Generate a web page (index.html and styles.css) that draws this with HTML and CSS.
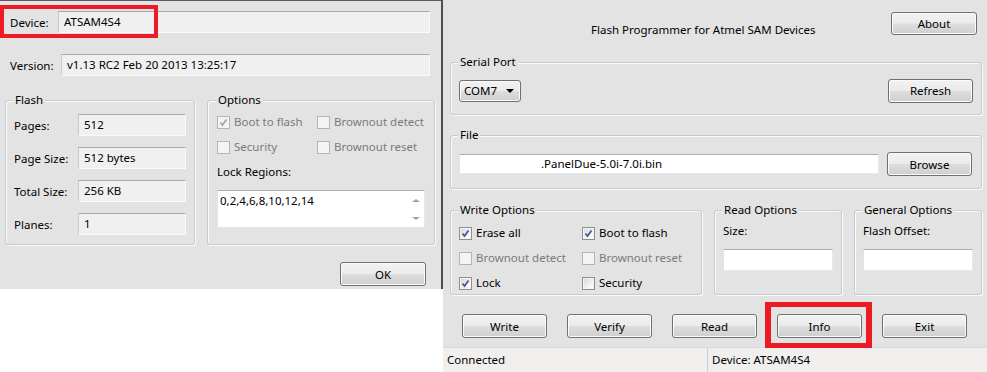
FILE: index.html
```html
<!DOCTYPE html>
<html lang="en">
<head>
    <meta charset="UTF-8">
    <title>SAM-BA Flash Programmer</title>
    <link rel="stylesheet" href="styles.css">
</head>
<body>
<div class="screen">
    <div class="dialog">
        <div class="mark mark-device"></div>
        <div class="field-row row-device">
            <span class="label label-device">Device:</span>
            <div class="field">ATSAM4S4</div>
        </div>
        <div class="field-row row-version">
            <span class="label label-version">Version:</span>
            <div class="field">v1.13 RC2 Feb 20 2013 13:25:17</div>
        </div>
        <div class="dialog-groups">
            <div class="group group-flash">
                <span class="group-title">Flash</span>
                <div class="flash-grid">
                    <span>Pages:</span><div class="field">512</div>
                    <span>Page Size:</span><div class="field">512 bytes</div>
                    <span>Total Size:</span><div class="field">256 KB</div>
                    <span>Planes:</span><div class="field">1</div>
                </div>
            </div>
            <div class="group group-options">
                <span class="group-title">Options</span>
                <div class="check-grid">
                    <label class="check disabled"><span class="cb"><svg viewBox="0 0 11 11"><path d="M2.5 5.5 L4.5 8 L8.5 2.5"/></svg></span>Boot to flash</label>
                    <label class="check disabled"><span class="cb"></span>Brownout detect</label>
                    <label class="check disabled"><span class="cb"></span>Security</label>
                    <label class="check disabled"><span class="cb"></span>Brownout reset</label>
                </div>
                <div class="lock-label">Lock Regions:</div>
                <div class="lock-box">
                    <div class="lock-text">0,2,4,6,8,10,12,14</div>
                    <div class="lock-scroll"><span class="arrow-up"></span><span class="arrow-down"></span></div>
                </div>
            </div>
        </div>
        <div class="dialog-footer">
            <button class="btn btn-ok">OK</button>
        </div>
    </div>

    <div class="main">
        <div class="main-header">
            <div class="app-title">Flash Programmer for Atmel SAM Devices</div>
            <button class="btn btn-about">About</button>
        </div>
        <div class="main-body">
            <div class="group group-serial">
                <span class="group-title">Serial Port</span>
                <div class="serial-row">
                    <div class="combo">COM7<span class="combo-arrow"></span></div>
                    <button class="btn">Refresh</button>
                </div>
            </div>
            <div class="group group-file">
                <span class="group-title">File</span>
                <div class="file-row">
                    <div class="input input-file">.PanelDue-5.0i-7.0i.bin</div>
                    <button class="btn">Browse</button>
                </div>
            </div>
            <div class="options-row">
                <div class="group group-write">
                    <span class="group-title">Write Options</span>
                    <div class="check-grid write-grid">
                        <label class="check"><span class="cb"><svg viewBox="0 0 11 11"><path d="M2.5 5.5 L4.5 8 L8.5 2.5"/></svg></span>Erase all</label>
                        <label class="check"><span class="cb"><svg viewBox="0 0 11 11"><path d="M2.5 5.5 L4.5 8 L8.5 2.5"/></svg></span>Boot to flash</label>
                        <label class="check disabled"><span class="cb"></span>Brownout detect</label>
                        <label class="check disabled"><span class="cb"></span>Brownout reset</label>
                        <label class="check"><span class="cb"><svg viewBox="0 0 11 11"><path d="M2.5 5.5 L4.5 8 L8.5 2.5"/></svg></span>Lock</label>
                        <label class="check"><span class="cb"></span>Security</label>
                    </div>
                </div>
                <div class="group group-small">
                    <span class="group-title">Read Options</span>
                    <div class="small-label">Size:</div>
                    <div class="input input-small"></div>
                </div>
                <div class="group group-small">
                    <span class="group-title">General Options</span>
                    <div class="small-label">Flash Offset:</div>
                    <div class="input input-small"></div>
                </div>
            </div>
            <div class="action-row">
                <button class="btn">Write</button>
                <button class="btn">Verify</button>
                <button class="btn">Read</button>
                <button class="btn">Info</button>
                <button class="btn">Exit</button>
            </div>
        </div>
        <div class="status-bar">
            <div class="status-cell status-left">Connected</div>
            <div class="status-cell">Device: ATSAM4S4</div>
        </div>
        <div class="mark mark-info"></div>
    </div>
</div>
</body>
</html>
```

FILE: styles.css
```css
body {
    margin: 0;
    background-color: #fff;
    font-family: "Noto Sans", sans-serif;
    font-size: 11.5px;
    color: #000;
}
.screen {
    display: flex;
    align-items: flex-start;
    width: 987px;
    height: 372px;
    overflow: hidden;
}

/* red annotation boxes */
.mark {
    position: absolute;
    box-sizing: border-box;
    border: 4px solid #ed1c24;
}
.mark-device {
    left: 0;
    top: 4px;
    width: 158px;
    height: 33px;
}
.mark-info {
    left: 322px;
    top: 302px;
    width: 107px;
    height: 46px;
    border-width: 5px 6px;
}

/* left info dialog */
.dialog {
    position: relative;
    width: 441px;
    height: 288px;
    background-color: #e3e3e3;
    border-top: 1px solid #5b5b5b;
    border-right: 2px solid #4e4e4e;
}
.field-row {
    display: flex;
    align-items: center;
    height: 22px;
    margin: 0 11px 0 10px;
}
.row-device {
    margin-top: 10px;
}
.row-version {
    margin-top: 21px;
}
.label-device {
    width: 48px;
}
.label-version {
    width: 51px;
}
.field {
    flex: 1;
    height: 22px;
    box-sizing: border-box;
    background-color: #f0f0f0;
    border: 1px solid;
    border-color: #a9a9a9 #fafafa #fafafa #c9c9c9;
    padding-left: 5px;
    line-height: 20px;
}
.dialog-groups {
    display: flex;
    gap: 12px;
    height: 145px;
    margin: 24px 6px 0 5px;
}
.group {
    box-sizing: border-box;
    border: 1px solid #c9c9c9;
    border-radius: 3px;
    box-shadow: inset 1px 1px 0 #fbfbfb, 1px 1px 0 #fbfbfb;
    padding: 0 8px;
}
.group-title {
    display: table;
    margin: -9px 0 0 -1px;
    padding: 0 2px;
    line-height: 16px;
    background-color: #e3e3e3;
}
.group-flash {
    width: 190px;
}
.group-options {
    flex: 1;
    padding: 0 9px;
}
.flash-grid {
    display: grid;
    grid-template-columns: 64px 1fr;
    row-gap: 11px;
    align-items: center;
    margin-top: 6px;
}
.check-grid {
    display: grid;
    grid-template-columns: 100px 1fr;
    row-gap: 9px;
    margin-top: 6px;
}
.check {
    display: flex;
    align-items: center;
    gap: 4px;
    height: 16px;
    line-height: 16px;
    white-space: nowrap;
}
.check.disabled {
    color: #7b7b7b;
}
.cb {
    display: flex;
    width: 13px;
    height: 13px;
    box-sizing: border-box;
    border: 1px solid #8e8f8f;
    background: linear-gradient(135deg, #d6d6d6, #f6f6f6 70%, #fdfdfd);
    box-shadow: inset 0 0 0 1px #f4f4f4;
}
.cb svg {
    width: 11px;
    height: 11px;
}
.cb path {
    fill: none;
    stroke: #42589a;
    stroke-width: 1.8;
}
.check.disabled .cb {
    border-color: #b4b4b4;
    background: #f4f4f4;
}
.check.disabled .cb path {
    stroke: #a5a5a5;
}
.lock-label {
    margin-top: 9px;
    line-height: 16px;
}
.lock-box {
    display: flex;
    height: 38px;
    margin-top: 10px;
    box-sizing: border-box;
    background-color: #fff;
    border: 1px solid;
    border-color: #abadb3 #e3e9ef #e3e9ef #e2e3ea;
}
.lock-text {
    flex: 1;
    padding: 2px 2px;
    line-height: 16px;
}
.lock-scroll {
    display: flex;
    flex-direction: column;
    justify-content: space-between;
    align-items: center;
    width: 16px;
    padding: 8px 0 7px;
    box-sizing: border-box;
}
.arrow-up, .arrow-down {
    width: 0;
    height: 0;
    border-left: 4px solid transparent;
    border-right: 4px solid transparent;
}
.arrow-up {
    border-bottom: 3px solid #a3a3a3;
}
.arrow-down {
    border-top: 3px solid #a3a3a3;
}
.dialog-footer {
    display: flex;
    justify-content: flex-end;
    margin: 17px 15px 0 0;
}

/* buttons */
.btn {
    width: 85px;
    height: 24px;
    box-sizing: border-box;
    border: 1px solid #707070;
    border-radius: 3px;
    background: linear-gradient(#f2f2f2, #ebebeb 48%, #dddddd 52%, #cfcfcf);
    box-shadow: inset 0 0 0 1px #fbfbfb;
    font: inherit;
    color: #000;
    padding: 0;
}
.btn-ok {
    width: 86px;
}

/* main programmer window */
.main {
    position: relative;
    width: 544px;
    height: 372px;
    background-color: #e3e3e3;
}
.main-header {
    display: flex;
    align-items: flex-start;
    height: 62px;
    padding: 0 10px 0 7px;
}
.app-title {
    margin: 22px 0 0 141px;
    line-height: 16px;
}
.btn-about {
    width: 86px;
    height: 23px;
    margin: 12px 0 0 auto;
}
.main-body {
    padding: 0 5px 0 7px;
}
.group-serial {
    height: 53px;
}
.serial-row {
    display: flex;
    align-items: center;
    justify-content: space-between;
    height: 23px;
    margin-top: 9px;
}
.combo {
    display: flex;
    align-items: center;
    width: 62px;
    height: 22px;
    box-sizing: border-box;
    padding: 0 0 0 4px;
    border: 1px solid #707070;
    border-radius: 3px;
    background: linear-gradient(#f2f2f2, #ebebeb 48%, #dddddd 52%, #cfcfcf);
    box-shadow: inset 0 0 0 1px #fbfbfb;
}
.combo-arrow {
    width: 0;
    height: 0;
    margin-left: auto;
    margin-right: 6px;
    border-left: 4px solid transparent;
    border-right: 4px solid transparent;
    border-top: 4px solid #000;
}
.group-file {
    height: 54px;
    margin-top: 20px;
}
.file-row {
    display: flex;
    align-items: center;
    gap: 8px;
    height: 24px;
    margin: 9px 1px 0 0;
}
.input {
    box-sizing: border-box;
    background-color: #fff;
    border: 1px solid;
    border-color: #abadb3 #e3e9ef #e3e9ef #e2e3ea;
}
.input-file {
    flex: 1;
    height: 20px;
    padding-left: 81px;
    line-height: 18px;
}
.options-row {
    display: grid;
    grid-template-columns: 252px 128px 128px;
    gap: 12px;
    height: 85px;
    margin-top: 21px;
}
.write-grid {
    grid-template-columns: 123px 1fr;
    margin-top: 7px;
}
.small-label {
    margin-top: 5px;
    line-height: 16px;
}
.input-small {
    height: 22px;
    margin-top: 10px;
}
.action-row {
    display: flex;
    gap: 20px;
    margin-top: 19px;
    padding-left: 12px;
}
.status-bar {
    display: flex;
    height: 25px;
    margin-top: 9px;
    box-sizing: border-box;
    background-color: #f0efee;
    border-top: 1px solid #dadada;
}
.status-cell {
    padding-left: 4px;
    line-height: 23px;
}
.status-left {
    width: 260px;
    border-right: 1px solid #cfcfcf;
}
```
